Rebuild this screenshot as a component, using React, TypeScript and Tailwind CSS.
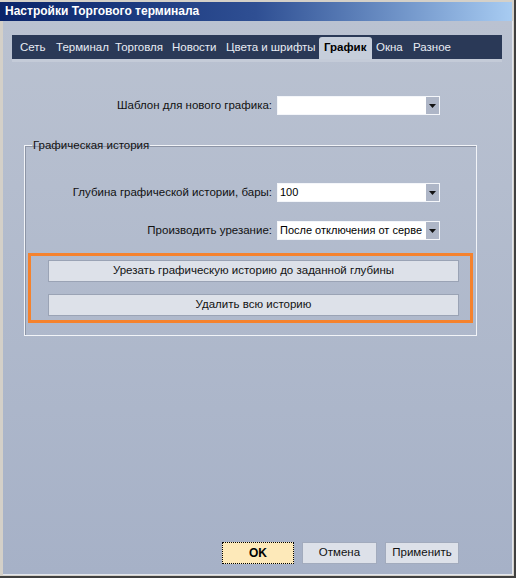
import React from 'react';

const font = { fontFamily: '"Liberation Sans", Arial, sans-serif' };

const tabs = [
  { label: 'Сеть', w: 'w-[36px]' },
  { label: 'Терминал', w: 'w-[59px]' },
  { label: 'Торговля', w: 'w-[57px]' },
  { label: 'Новости', w: 'w-[54px]' },
  { label: 'Цвета и шрифты', w: 'w-[97px]' },
  { label: 'График', w: 'w-[53px]', active: true },
  { label: 'Окна', w: 'w-[37px]' },
  { label: 'Разное', w: 'w-[47px]' },
];

const Combo: React.FC<{ value?: string }> = ({ value }) => (
  <div className="w-[163px] h-[19px] bg-white border border-[#f4f6fa] flex items-stretch">
    <div className="flex-1 min-w-0 whitespace-nowrap pl-[2px] text-[11px] leading-[17px] text-black">{value}</div>
    <div className="w-[13px] bg-[#aeb6c7] flex items-center justify-center">
      <svg width="7" height="4" viewBox="0 0 7 4">
        <path d="M0 0h7L3.5 4z" fill="#111" />
      </svg>
    </div>
  </div>
);

const Row: React.FC<{ label: string; labelW: string; value?: string; className?: string }> = ({ label, labelW, value, className }) => (
  <div className={`flex items-center ${className ?? ''}`}>
    <div className={`${labelW} text-right pr-[5px] text-[11.5px] text-[#111] whitespace-nowrap`}>{label}</div>
    <Combo value={value} />
  </div>
);

export default function App() {
  return (
    <div style={font} className="w-[516px] h-[578px] bg-[#d4d0c8] border-r-2 border-b-2 border-[#404040] pl-[3px] pt-[2px] pr-[1px] pb-[1px] flex flex-col">
      <div className="h-[19px] bg-gradient-to-r from-[#0a246a] via-[#2f4f93] to-[#a8ccf2] text-white font-bold text-[12px] leading-[19px] pl-[2px] pr-[2px] -ml-[3px] mr-[1px]">
        <span className="pl-[3px]">Настройки Торгового терминала</span>
      </div>
      <div className="flex-1 flex flex-col bg-gradient-to-b from-[#bac2d1] to-[#a6b1c7] border-r border-b border-[#e2e6ee]">
        <div className="ml-[9px] mr-[10px] mt-[14px]">
          <div className="h-[24px] bg-[#2a3957] flex items-end pl-[4px]">
            {tabs.map((t) => (
              <div
                key={t.label}
                className={`${t.w} h-[22px] flex items-center text-[11.5px] whitespace-nowrap ${
                  t.active ? 'bg-[#c6cedb] text-black font-bold pl-[5px] rounded-t-[3px]' : 'text-[#e8ecf4] pl-[4px]'
                }`}
              >
                {t.label}
              </div>
            ))}
          </div>
          <div className="h-[3px] bg-[#c4cbd8]" />
        </div>

        <Row className="mt-[34px]" labelW="w-[274px]" label="Шаблон для нового графика:" />

        <fieldset className="ml-[21px] mr-[35px] mt-[23px] border border-[#f2f4f8] shadow-[inset_1px_1px_0_#8d95a6] px-[3px] pb-[12px]">
          <legend className="ml-[4px] px-[1px] text-[11.5px] leading-[14px] text-[#111]">Графическая история</legend>
          <Row className="mt-[31px]" labelW="w-[249px]" label="Глубина графической истории, бары:" value="100" />
          <Row className="mt-[19px]" labelW="w-[249px]" label="Производить урезание:" value="После отключения от серве" />
          <div className="mt-[13px] border-[3px] border-[#f5822d] pt-[4px] pb-[4px] pl-[17px] pr-[11px] flex flex-col gap-[12px]">
            <button className="h-[22px] bg-[#dde1e9] border border-[#9aa3b5] text-[11.5px] text-[#111]">
              Урезать графическую историю до заданной глубины
            </button>
            <button className="h-[22px] bg-[#dde1e9] border border-[#9aa3b5] text-[11.5px] text-[#111]">
              Удалить всю историю
            </button>
          </div>
        </fieldset>

        <div className="flex-1" />

        <div className="flex justify-end mr-[53px] mb-[10px] gap-[8px]">
          <button className="w-[72px] h-[22px] bg-[#fde9b9] border border-dotted border-black text-[12px] font-bold text-black">
            OK
          </button>
          <button className="w-[75px] h-[22px] bg-[#dde1e9] border border-[#a2abbd] text-[11.5px] text-[#111]">Отмена</button>
          <button className="w-[74px] h-[22px] bg-[#dde1e9] border border-[#a2abbd] text-[11.5px] text-[#111]">Применить</button>
        </div>
      </div>
    </div>
  );
}
